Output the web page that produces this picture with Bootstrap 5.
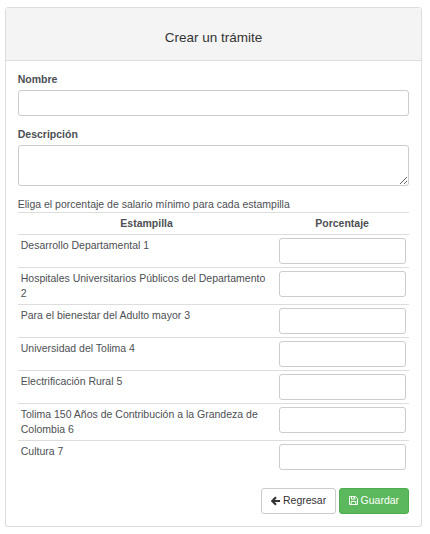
<!DOCTYPE html>
<html lang="es">
<head>
<meta charset="utf-8">
<meta name="viewport" content="width=device-width, initial-scale=1">
<title>Crear un trámite</title>
<link href="https://cdn.jsdelivr.net/npm/bootstrap@5.3.0/dist/css/bootstrap.min.css" rel="stylesheet">
<style>
body{font-family:"Liberation Sans",Arial,sans-serif;font-size:10.5px;line-height:15px;color:#4c4f53;background:#fff;overflow:hidden}
.panel-box{width:417px;height:520px;margin:7px 0 0 5px;border:1px solid #ddd;border-radius:3px;box-shadow:0 1px 1px rgba(0,0,0,.05);color:inherit}
.panel-head{height:53px;background:#f4f4f4;border-bottom:1px solid #ddd;padding:7px 0 0}
.panel-head h4{font-size:13.5px;line-height:15px;font-weight:400;color:#333}
.panel-main{padding:11px 12px 12px}
.form-label{line-height:15px;margin:0 0 3px -.25px}
.form-control{height:26px;border:1px solid #ccc;border-radius:3px;padding:4px 9px;font-size:10.5px;box-shadow:none}
textarea.form-control{height:41px;min-height:41px;resize:vertical}
.first-group{margin-bottom:11px}
.intro{margin-left:-.25px}
.stamps{table-layout:fixed;line-height:15px;color:inherit;border-color:#ddd;margin-bottom:14px}
.stamps>:not(caption)>*>*{padding:3px;border-width:1px 0 0;color:inherit;border-color:#ddd;background:none;vertical-align:top;box-shadow:none}
.stamps>tbody>tr>td:first-child{padding-left:2.75px}
.stamps>thead>tr>th{padding-right:3.75px}
.stamps tr{height:33px}
.stamps thead tr{height:22px}
.stamps .tall{height:37px}
.w-pct{width:133px}
.actions{gap:3px}
.btn{height:26px;font-size:10.5px;line-height:15px;padding:0 9px;border-radius:3px}
.btn svg{flex:none;margin-right:3px}
.btn-back{width:75px;color:#333;border-color:#ccc;background:#fff}
.btn-save{width:70px;color:#fff;background:#5cb85c;border-color:#4cae4c}
.btn-save svg{margin-right:2.6px}
</style>
<script src="https://cdn.jsdelivr.net/npm/bootstrap@5.3.0/dist/js/bootstrap.bundle.min.js"></script>
</head>
<body>
<main class="card panel-box">
  <div class="panel-head d-flex align-items-center justify-content-center"><h4 class="m-0">Crear un trámite</h4></div>
  <form class="panel-main d-flex flex-column">
    <div class="first-group">
      <label class="form-label d-block fw-bold" for="nombre">Nombre</label>
      <input class="form-control" id="nombre" type="text">
    </div>
    <div class="first-group">
      <label class="form-label d-block fw-bold" for="desc">Descripción</label>
      <textarea class="form-control d-block" id="desc"></textarea>
    </div>
    <div class="intro">Eliga el porcentaje de salario mínimo para cada estampilla</div>
    <table class="table stamps">
      <thead><tr><th class="text-center">Estampilla</th><th class="text-center w-pct">Porcentaje</th></tr></thead>
      <tbody>
        <tr><td>Desarrollo Departamental 1</td><td><input class="form-control" type="text" aria-label="Porcentaje 1"></td></tr>
        <tr class="tall"><td>Hospitales Universitarios Públicos del Departamento 2</td><td><input class="form-control" type="text" aria-label="Porcentaje 2"></td></tr>
        <tr><td>Para el bienestar del Adulto mayor 3</td><td><input class="form-control" type="text" aria-label="Porcentaje 3"></td></tr>
        <tr><td>Universidad del Tolima 4</td><td><input class="form-control" type="text" aria-label="Porcentaje 4"></td></tr>
        <tr><td>Electrificación Rural 5</td><td><input class="form-control" type="text" aria-label="Porcentaje 5"></td></tr>
        <tr class="tall"><td>Tolima 150 Años de Contribución a la Grandeza de Colombia 6</td><td><input class="form-control" type="text" aria-label="Porcentaje 6"></td></tr>
        <tr><td>Cultura 7</td><td><input class="form-control" type="text" aria-label="Porcentaje 7"></td></tr>
      </tbody>
    </table>
    <div class="d-flex justify-content-end actions">
      <button type="button" class="btn btn-back d-flex align-items-center"><svg width="9" height="10" viewBox="0 0 9 10" aria-hidden="true"><path d="M5 1.2 1.3 5 5 8.8M1.5 5H9" fill="none" stroke="currentColor" stroke-width="2.2"/></svg><span>Regresar</span></button>
      <button type="button" class="btn btn-save d-flex align-items-center"><svg width="9" height="9" viewBox="0 0 9 9" aria-hidden="true"><path d="M.5.5h6l2 2v6h-8zM2.5.5v2.7h3.3V.5M2.2 8.5V5.5h4.6v3" fill="none" stroke="currentColor" stroke-width=".95"/><path d="M4.4 1h1v1.6h-1z" fill="currentColor"/></svg><span>Guardar</span></button>
    </div>
  </form>
</main>
</body>
</html>
